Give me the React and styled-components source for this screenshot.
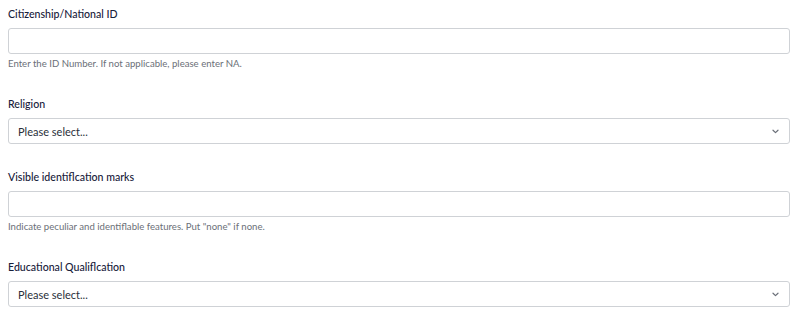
import React from "react";
import styled, { createGlobalStyle } from "styled-components";

const Global = createGlobalStyle`
  html, body { margin: 0; padding: 0; background: #fff; }
  body { font-family: "Lato", "Noto Sans", sans-serif; }
  * { box-sizing: border-box; }
`;

const Form = styled.div`
  padding: 6px 8px 0 8px;
  display: flex;
  flex-direction: column;
  gap: 25px;
`;

const Field = styled.div`
  display: flex;
  flex-direction: column;
`;

const Label = styled.label`
  display: block;
  height: 16px;
  font-size: 10.6px;
  line-height: 16px;
  font-weight: 500;
  color: #17203a;
  margin-bottom: 6px;
`;

const Input = styled.input`
  display: block;
  height: 26px;
  width: 100%;
  border: 1px solid #cfd2d6;
  border-radius: 3px;
  background: #fff;
  padding: 0 9px;
  font-family: inherit;
  font-size: 11px;
  outline: none;
`;

const SelectBox = styled.div`
  height: 26px;
  width: 100%;
  border: 1px solid #cfd2d6;
  border-radius: 3px;
  background: #fff;
  padding: 0 10px 0 9px;
  display: flex;
  align-items: center;
  justify-content: space-between;
  font-size: 11px;
  color: #2a2f3a;
`;

const Help = styled.div`
  height: 14px;
  margin-top: 3px;
  font-size: 9.6px;
  line-height: 14px;
  color: #6b7078;
`;

const Chevron = () => (
  <svg width="7" height="5" viewBox="0 0 7 5" aria-hidden="true">
    <path d="M1 1.2 L3.5 3.6 L6 1.2" fill="none" stroke="#6a6f78" strokeWidth="1.2" strokeLinecap="round" strokeLinejoin="round" />
  </svg>
);

const Select = ({ placeholder }) => (
  <SelectBox>
    <span>{placeholder}</span>
    <Chevron />
  </SelectBox>
);

export default function App() {
  return (
    <>
      <Global />
      <Form>
        <Field>
          <Label>Citizenship/National ID</Label>
          <Input />
          <Help>Enter the ID Number. If not applicable, please enter NA.</Help>
        </Field>
        <Field>
          <Label>Religion</Label>
          <Select placeholder="Please select..." />
        </Field>
        <Field>
          <Label>Visible identiflcation marks</Label>
          <Input />
          <Help>Indicate peculiar and identiflable features. Put "none" if none.</Help>
        </Field>
        <Field>
          <Label>Educational Qualiflcation</Label>
          <Select placeholder="Please select..." />
        </Field>
      </Form>
    </>
  );
}
